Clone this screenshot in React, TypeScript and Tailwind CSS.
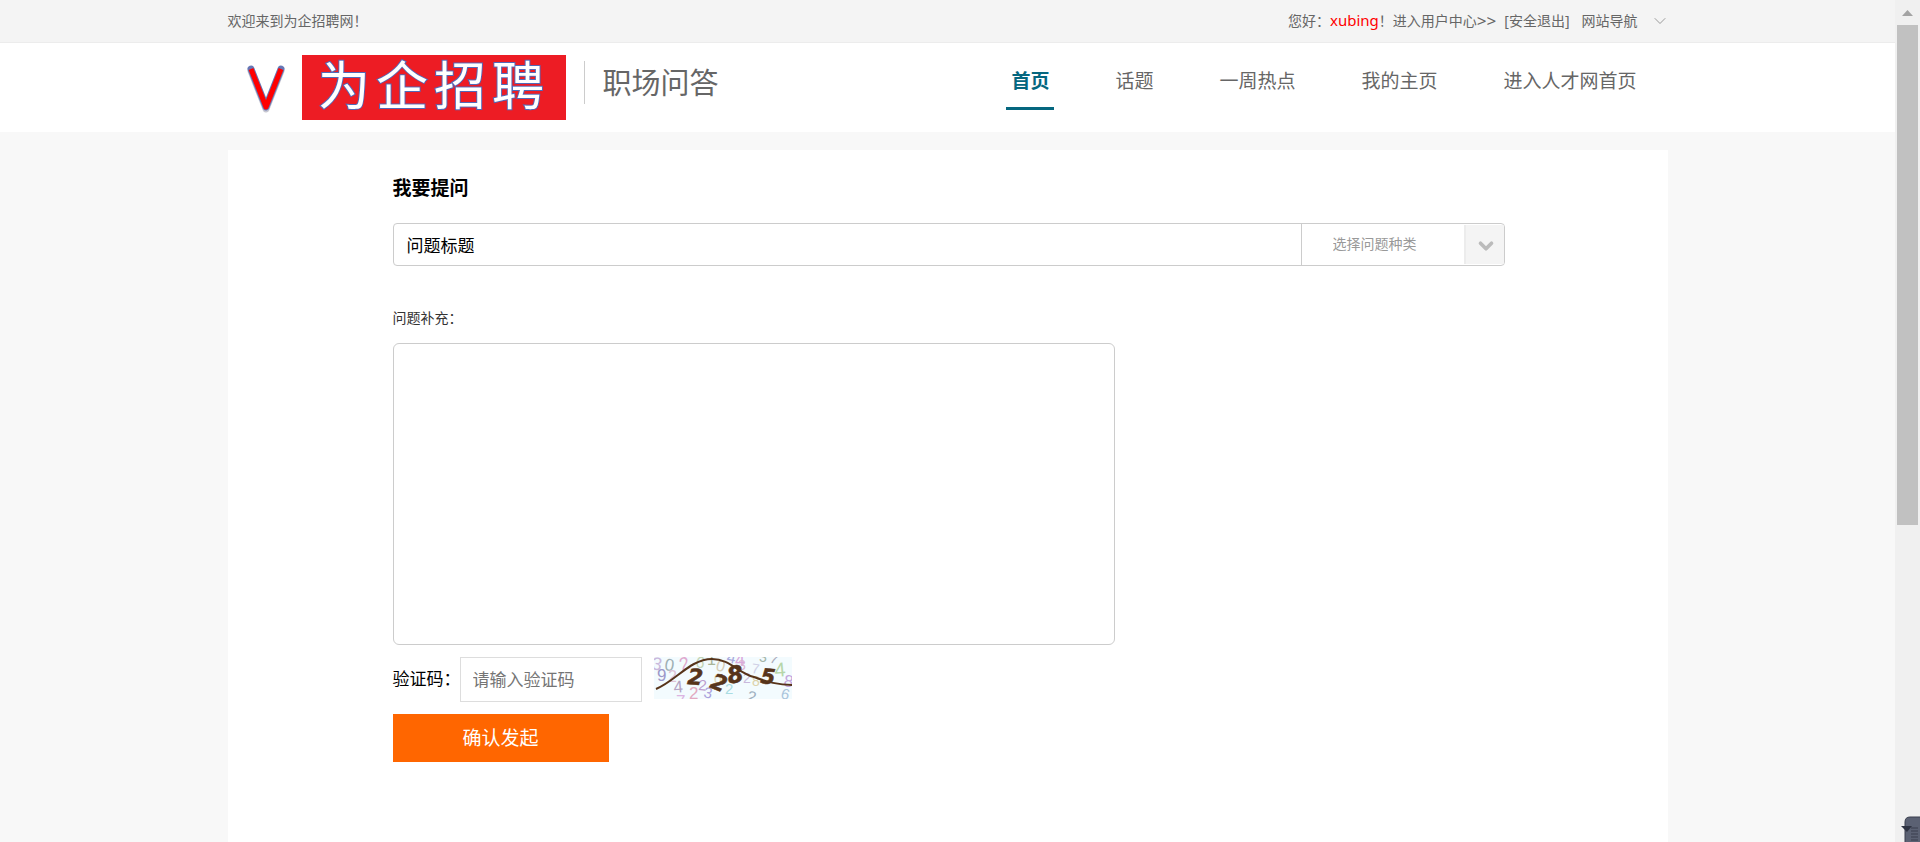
import { ChevronDown } from "lucide-react";

const navItems = ["首页", "话题", "一周热点", "我的主页", "进入人才网首页"];

const noise = [
  { ch: "3", x: -3, y: 12, size: 18, fill: "#c9b8dc", rotate: 10 },
  { ch: "0", x: 10, y: 13, size: 17, fill: "#9fb0b4", rotate: 8 },
  { ch: "9", x: 3, y: 24, size: 17, fill: "#9c98c9", rotate: 0 },
  { ch: "2", x: 14, y: 25, size: 16, fill: "#dfc3d6", rotate: 0 },
  { ch: "4", x: 20, y: 36, size: 17, fill: "#b4a4c4", rotate: -5 },
  { ch: "2", x: 28, y: 14, size: 18, fill: "#e0a9cf", rotate: -20 },
  { ch: "6", x: 41, y: 10, size: 16, fill: "#c3d6b8", rotate: 10 },
  { ch: "1", x: 53, y: 8, size: 16, fill: "#a9b598", rotate: 0 },
  { ch: "0", x: 61, y: 13, size: 16, fill: "#d6ccb4", rotate: 15 },
  { ch: "4", x: 72, y: 5, size: 16, fill: "#a9a9dc", rotate: 12 },
  { ch: "4", x: 81, y: 9, size: 18, fill: "#d9a9dc", rotate: 0 },
  { ch: "3", x: 84, y: 13, size: 14, fill: "#dcb4d4", rotate: 0 },
  { ch: "7", x: 97, y: 16, size: 14, fill: "#cfd0e6", rotate: 8 },
  { ch: "3", x: 105, y: 5, size: 14, fill: "#a3b5a8", rotate: 0 },
  { ch: "7", x: 115, y: 5, size: 14, fill: "#a9a9b8", rotate: 20 },
  { ch: "4", x: 121, y: 20, size: 20, fill: "#b6d6a9", rotate: -5 },
  { ch: "8", x: 129, y: 29, size: 17, fill: "#c2a4dc", rotate: 10 },
  { ch: "6", x: 126, y: 41, size: 15, fill: "#a9c4dc", rotate: 15 },
  { ch: "2", x: 44, y: 33, size: 15, fill: "#bd9fd0", rotate: 5 },
  { ch: "3", x: 49, y: 40, size: 15, fill: "#a9a0dc", rotate: 12 },
  { ch: "2", x: 35, y: 42, size: 17, fill: "#e2a9c0", rotate: 0 },
  { ch: "7", x: 22, y: 50, size: 17, fill: "#dcb4e2", rotate: 0 },
  { ch: "0", x: 60, y: 27, size: 14, fill: "#dcd6b8", rotate: 0 },
  { ch: "2", x: 71, y: 37, size: 15, fill: "#a9dce2", rotate: 0 },
  { ch: "2", x: 89, y: 26, size: 14, fill: "#c9b8dc", rotate: 0 },
  { ch: "8", x: 98, y: 29, size: 14, fill: "#dcd2a9", rotate: 0 },
  { ch: "2", x: 92, y: 44, size: 16, fill: "#9fb0c0", rotate: 15 },
];

const digits = [
  { ch: "2", x: 33, y: 27, size: 22, rotate: 5 },
  { ch: "2", x: 55, y: 30, size: 22, rotate: 22 },
  { ch: "8", x: 75, y: 27, size: 23, rotate: -12 },
  { ch: "5", x: 106, y: 26, size: 21, rotate: 6 },
];

function Logo() {
  return (
    <svg
      className="h-[65px] w-[338px] overflow-visible"
      viewBox="0 0 338 65"
      role="img"
      aria-label="为企招聘"
    >
      <path
        d="M23 16L38 54L53 16"
        fill="none"
        stroke="#c8c8d2"
        strokeWidth="7"
        strokeLinejoin="round"
        strokeLinecap="round"
      />
      <path
        d="M23 14L38 52L53 14"
        fill="none"
        stroke="#6677b5"
        strokeWidth="7"
        strokeLinejoin="round"
        strokeLinecap="round"
      />
      <path
        d="M23 14L38 52L53 14"
        fill="none"
        stroke="#ff0000"
        strokeWidth="5"
        strokeLinejoin="round"
      />
      <rect x="74" width="264" height="65" fill="#ed1c24" />
      <g
        fontFamily="'Noto Sans CJK SC', sans-serif"
        fontSize="52"
        fill="#fff"
        stroke="#5269b8"
        strokeWidth="2"
        paintOrder="stroke"
      >
        <text x="90" y="50">为</text>
        <text x="148" y="50">企</text>
        <text x="206" y="50">招</text>
        <text x="264" y="50">聘</text>
      </g>
    </svg>
  );
}

function Captcha() {
  return (
    <svg className="h-[42px] w-[138px]" viewBox="0 0 138 42" role="img" aria-label="验证码">
      <rect width="138" height="42" fill="#f3fbfe" />
      <g fontFamily="'Liberation Sans', sans-serif">
        {noise.map((n, i) => (
          <text
            key={i}
            x={n.x}
            y={n.y}
            fontSize={n.size}
            fill={n.fill}
            transform={`rotate(${n.rotate} ${n.x} ${n.y})`}
          >
            {n.ch}
          </text>
        ))}
      </g>
      <g
        fontFamily="'DejaVu Sans', sans-serif"
        fontWeight="bold"
        fontStyle="italic"
        fill="#57341a"
        stroke="#57341a"
        strokeWidth="0.6"
      >
        {digits.map((d, i) => (
          <text
            key={i}
            x={d.x}
            y={d.y}
            fontSize={d.size}
            transform={`rotate(${d.rotate} ${d.x} ${d.y})`}
          >
            {d.ch}
          </text>
        ))}
      </g>
      <path
        d="M2 32C22 24 36 2 58 2C76 2 84 16 100 20C114 25 124 28 138 28"
        fill="none"
        stroke="#57341a"
        strokeWidth="2"
      />
    </svg>
  );
}

function TopBar() {
  return (
    <div className="h-[43px] border-b border-[#ececec] bg-[#f4f4f4] text-sm text-[#666]">
      <div className="mx-auto flex h-full max-w-[1440px] items-center justify-between">
        <span>欢迎来到为企招聘网！</span>
        <div className="-mr-0.5 flex items-center">
          <span>您好：</span>
          <a href="#" className="text-[15px] text-[#f00]">xubing</a>
          <span>！</span>
          <a href="#" className="flex items-center">
            进入用户中心<span className="text-[17px]">&gt;&gt;</span>
          </a>
          <a href="#" className="ml-2">[安全退出]</a>
          <button type="button" className="ml-3 flex items-center gap-3">
            网站导航
            <ChevronDown className="size-5 text-[#888]" strokeWidth={1} />
          </button>
        </div>
      </div>
    </div>
  );
}

function Header() {
  return (
    <header className="bg-white">
      <div className="mx-auto flex h-[89px] max-w-[1440px] justify-between text-[#666]">
        <div className="flex pt-3">
          <Logo />
          <h1 className="mt-[6px] ml-[18px] h-[43px] border-l border-[#ccc] pl-[18px] text-[29px] leading-[43px]">
            职场问答
          </h1>
        </div>
        <nav className="flex gap-14 pr-[26px] text-[19px]">
          {navItems.map((item, index) => (
            <a
              key={item}
              href="#"
              className={`mt-3 h-[55px] px-[5px] leading-[52px] ${
                index === 0 ? "border-b-3 border-[#05677f] font-bold text-[#05677f]" : ""
              }`}
            >
              {item}
            </a>
          ))}
        </nav>
      </div>
    </header>
  );
}

function QuestionForm() {
  return (
    <form className="ml-[165px] max-w-[1112px]">
      <h2 className="pt-5 text-[19px] leading-9 font-bold text-black">我要提问</h2>
      <div className="mt-[17px] flex h-[43px] overflow-hidden rounded border border-[#ccc]">
        <input
          type="text"
          aria-label="问题标题"
          defaultValue="问题标题"
          className="min-w-0 flex-1 px-[13px] pt-[3px] text-[17px] text-black"
        />
        <div className="relative w-[203px] border-l border-[#ccc]">
          <select
            aria-label="选择问题种类"
            className="h-full w-full appearance-none pb-0.5 pl-[31px] text-sm text-[#999]"
          >
            <option>选择问题种类</option>
          </select>
          <span className="pointer-events-none absolute inset-y-px right-0 flex w-10 items-center justify-center border-l-2 border-[#ececec] bg-[#f4f4f4] pt-[3px] pl-[3px]">
            <ChevronDown className="size-[22px] text-[#bbb]" strokeWidth={4} />
          </span>
        </div>
      </div>

      <label htmlFor="detail" className="mt-10 block text-sm leading-6 text-[#333]">
        问题补充：
      </label>
      <textarea
        id="detail"
        className="mt-[13px] block h-[302px] w-[722px] max-w-full resize-none rounded-md border border-[#ccc]"
      />

      <div className="mt-3 flex items-start">
        <label htmlFor="code" className="w-[67px] text-[17px] leading-11 whitespace-nowrap text-black">
          验证码：
        </label>
        <input
          id="code"
          type="text"
          placeholder="请输入验证码"
          className="h-[45px] w-[182px] border border-[#ddd] px-3 text-[17px] placeholder:text-[#757575]"
        />
        <button type="button" className="ml-3">
          <Captcha />
        </button>
      </div>
      <button type="submit" className="mt-3 h-12 w-[216px] bg-[#ff6600] text-[19px] text-white">
        确认发起
      </button>
    </form>
  );
}

function ScrollBar() {
  return (
    <div className="relative w-[25px] shrink-0 bg-[#f0f0f0]">
      <svg className="h-[25px] w-[25px]" viewBox="0 0 25 25" aria-hidden="true">
        <path d="M7 16L12.500 10L18 16Z" fill="#a3a3a3" />
      </svg>
      <div className="mx-[2px] h-[500px] bg-[#c1c1c1]" />
      <svg
        className="absolute right-0 bottom-0 h-[26px] w-4 overflow-visible"
        viewBox="0 0 16 26"
        aria-hidden="true"
      >
        <path d="M1 27V6Q1 1 6 1H17V27Z" fill="#5b6173" stroke="#3a3f4e" strokeWidth="1" />
        <path d="M7 12H14M7 15H14M7 18H14M7 21H14M7 24H14" stroke="#3a3f4e" />
        <path d="M-3 10H8L3 16Z" fill="#2e3342" />
      </svg>
    </div>
  );
}

export default function App() {
  return (
    <div
      className="flex h-screen overflow-hidden bg-[#f8f8f8]"
      style={{ fontFamily: '"Noto Sans", "Noto Sans CJK SC", sans-serif' }}
    >
      <div className="flex min-w-0 flex-1 flex-col">
        <TopBar />
        <Header />
        <main className="mx-auto mt-[18px] w-full max-w-[1440px] flex-1 bg-white">
          <QuestionForm />
        </main>
      </div>
      <ScrollBar />
    </div>
  );
}
